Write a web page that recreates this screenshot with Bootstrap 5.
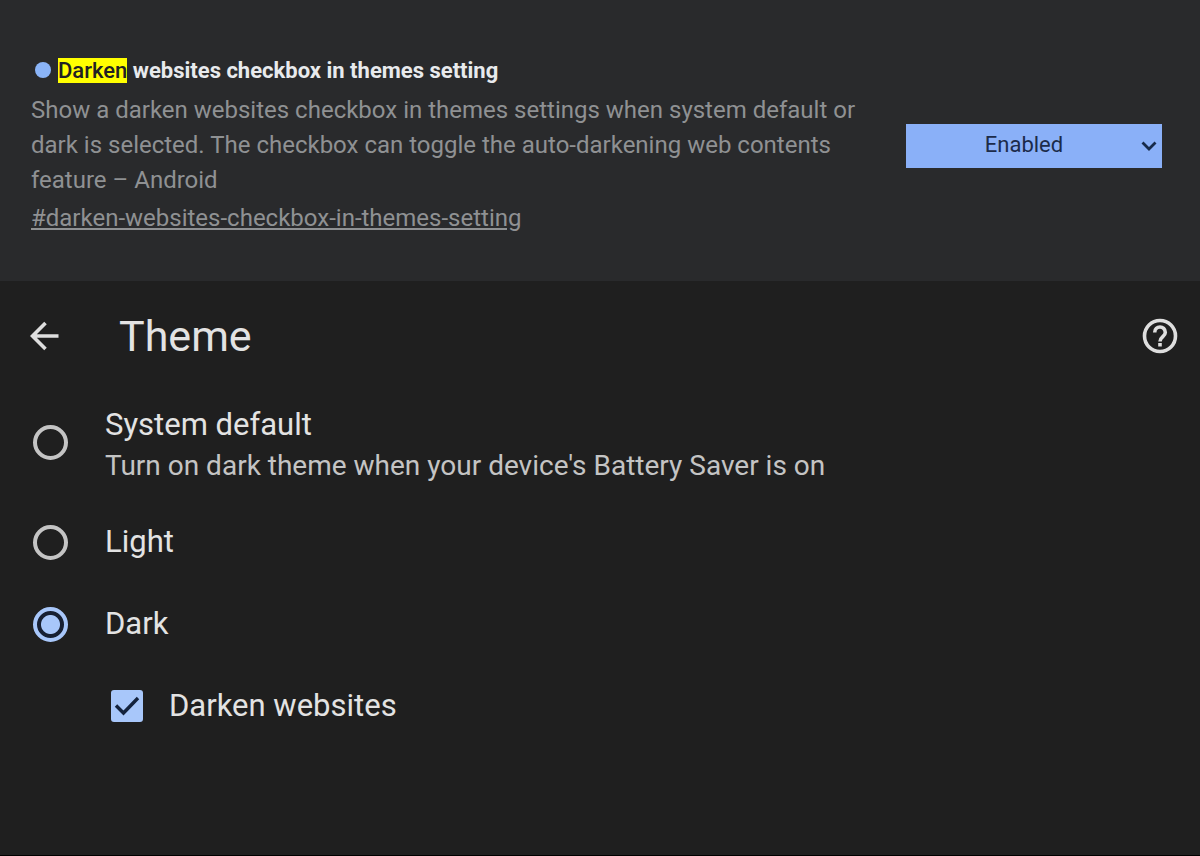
<!DOCTYPE html>
<html lang="en" data-bs-theme="dark">
<head>
<meta charset="utf-8">
<meta name="viewport" content="width=device-width, initial-scale=1">
<title>Theme settings</title>
<link href="https://cdn.jsdelivr.net/npm/bootstrap@5.3.0/dist/css/bootstrap.min.css" rel="stylesheet">
<style>
body{font-family:Roboto,sans-serif;background:#1f1f1f;color:#e3e3e3;border-bottom:1px solid #000}
.flag{background:#292a2c;padding:56px 38px 45px 31px}
.flag-text{flex:0 1 832px;min-width:0;overflow-wrap:anywhere}
.flag h2{font-size:22px;line-height:30px;font-weight:700;color:#e8eaed;margin-bottom:7px}
.dot{width:16px;height:16px;background:#8ab4f8;margin:0 7px 3px 4px}
.hit{background:#ff0;color:#202124;padding:0;font-weight:500}
.flag p{font-size:24px;line-height:35px;color:#8f9193;margin-bottom:3px}
.flag a{font-size:24px;line-height:35px;color:#8f9193}
.state{width:256px;height:44px;background:#8ab0f8;color:#1c2b4a;border:0;border-radius:0;font-size:22px;text-align:center;text-align-last:center;appearance:none;padding:0 20px 4px 0}
.chev{right:5px;top:17px;pointer-events:none}
.topbar{padding:24px 22px 0 30px;height:110px}
.topbar h1{font-size:43px;line-height:62px;font-weight:400;color:#e3e3e3;margin:0 0 0 59px}
.icon-btn{background:none;border:0;padding:0;color:#dedede;line-height:0}
.opts{padding:0 33px}
.opt{display:flex;align-items:center;gap:37px;font-size:31px;line-height:42px;min-height:82px}
.opt.tall{min-height:102px;margin-bottom:8px}
.tall-text{padding-top:6px}
.opt .desc{font-size:28px;line-height:40px;color:#c4c4c4}
.opt .form-check-input{flex:none;margin:0;width:35px;height:35px;border:4px solid #c4c4c4;background:none;box-shadow:none}
.opt .form-check-input:checked{border-color:#a8c7fa;background:radial-gradient(circle,#a8c7fa 9px,#172033 10px)}
.opt.sub{gap:26px;padding-left:78px}
.opt .form-check-input.box,.opt .form-check-input.box:checked{width:32px;height:32px;border:0;border-radius:3px;background:#a8c7fa}
.tick{left:0;top:0;pointer-events:none}
</style>
</head>
<body class="min-vh-100">
<section class="flag d-flex flex-wrap flex-lg-nowrap gap-3 justify-content-between align-items-center">
  <div class="flag-text">
    <h2 class="d-flex align-items-center"><span class="dot rounded-circle flex-shrink-0"></span><span><mark class="hit">Darken</mark> websites checkbox in themes setting</span></h2>
    <p>Show a darken websites checkbox in themes settings when system default or dark is selected. The checkbox can toggle the auto-darkening web contents feature – Android</p>
    <a href="#darken-websites-checkbox-in-themes-setting">#darken-websites-checkbox-in-themes-setting</a>
  </div>
  <div class="position-relative flex-shrink-0">
    <select class="state d-block" aria-label="Darken websites checkbox in themes setting"><option>Default</option><option selected>Enabled</option><option>Disabled</option></select>
    <svg class="chev position-absolute" width="16" height="12" viewBox="0 0 16 12" fill="none" stroke="#172a4a" stroke-width="2.8"><path d="M1.500 1.500 8 8l6.500-6.500"/></svg>
  </div>
</section>
<main>
  <header class="topbar d-flex align-items-start">
    <button class="icon-btn" aria-label="Back"><svg width="30" height="62" viewBox="0 0 30 62" fill="none" stroke="currentColor" stroke-width="3.6"><path d="M28.500 31H3M15.500 18 2.500 31l13 13"/></svg></button>
    <h1>Theme</h1>
    <button class="icon-btn ms-auto" aria-label="Help"><svg width="36" height="62" viewBox="0 0 36 62" fill="none" stroke="currentColor" stroke-width="3.6"><circle cx="18" cy="31" r="15.500"/><path d="M12.700 27.500c0-7.300 10.600-7.300 10.600 0 0 4-5.300 4.300-5.300 9M18 38v3.500"/></svg></button>
  </header>
  <div class="opts">
    <label class="opt tall"><input class="form-check-input" type="radio" name="theme"><span class="tall-text"><span class="d-block">System default</span><span class="desc d-block">Turn on dark theme when your device's Battery Saver is on</span></span></label>
    <label class="opt"><input class="form-check-input" type="radio" name="theme"><span>Light</span></label>
    <label class="opt"><input class="form-check-input" type="radio" name="theme" checked><span>Dark</span></label>
    <label class="opt sub"><span class="position-relative d-flex"><input class="form-check-input box" type="checkbox" checked><svg class="tick position-absolute" width="32" height="32" viewBox="0 0 32 32" fill="none" stroke="#14233d" stroke-width="3.4"><path d="m5 15.500 7.500 7.500L27 8"/></svg></span><span>Darken websites</span></label>
  </div>
</main>
<script src="https://cdn.jsdelivr.net/npm/bootstrap@5.3.0/dist/js/bootstrap.bundle.min.js"></script>
</body>
</html>
